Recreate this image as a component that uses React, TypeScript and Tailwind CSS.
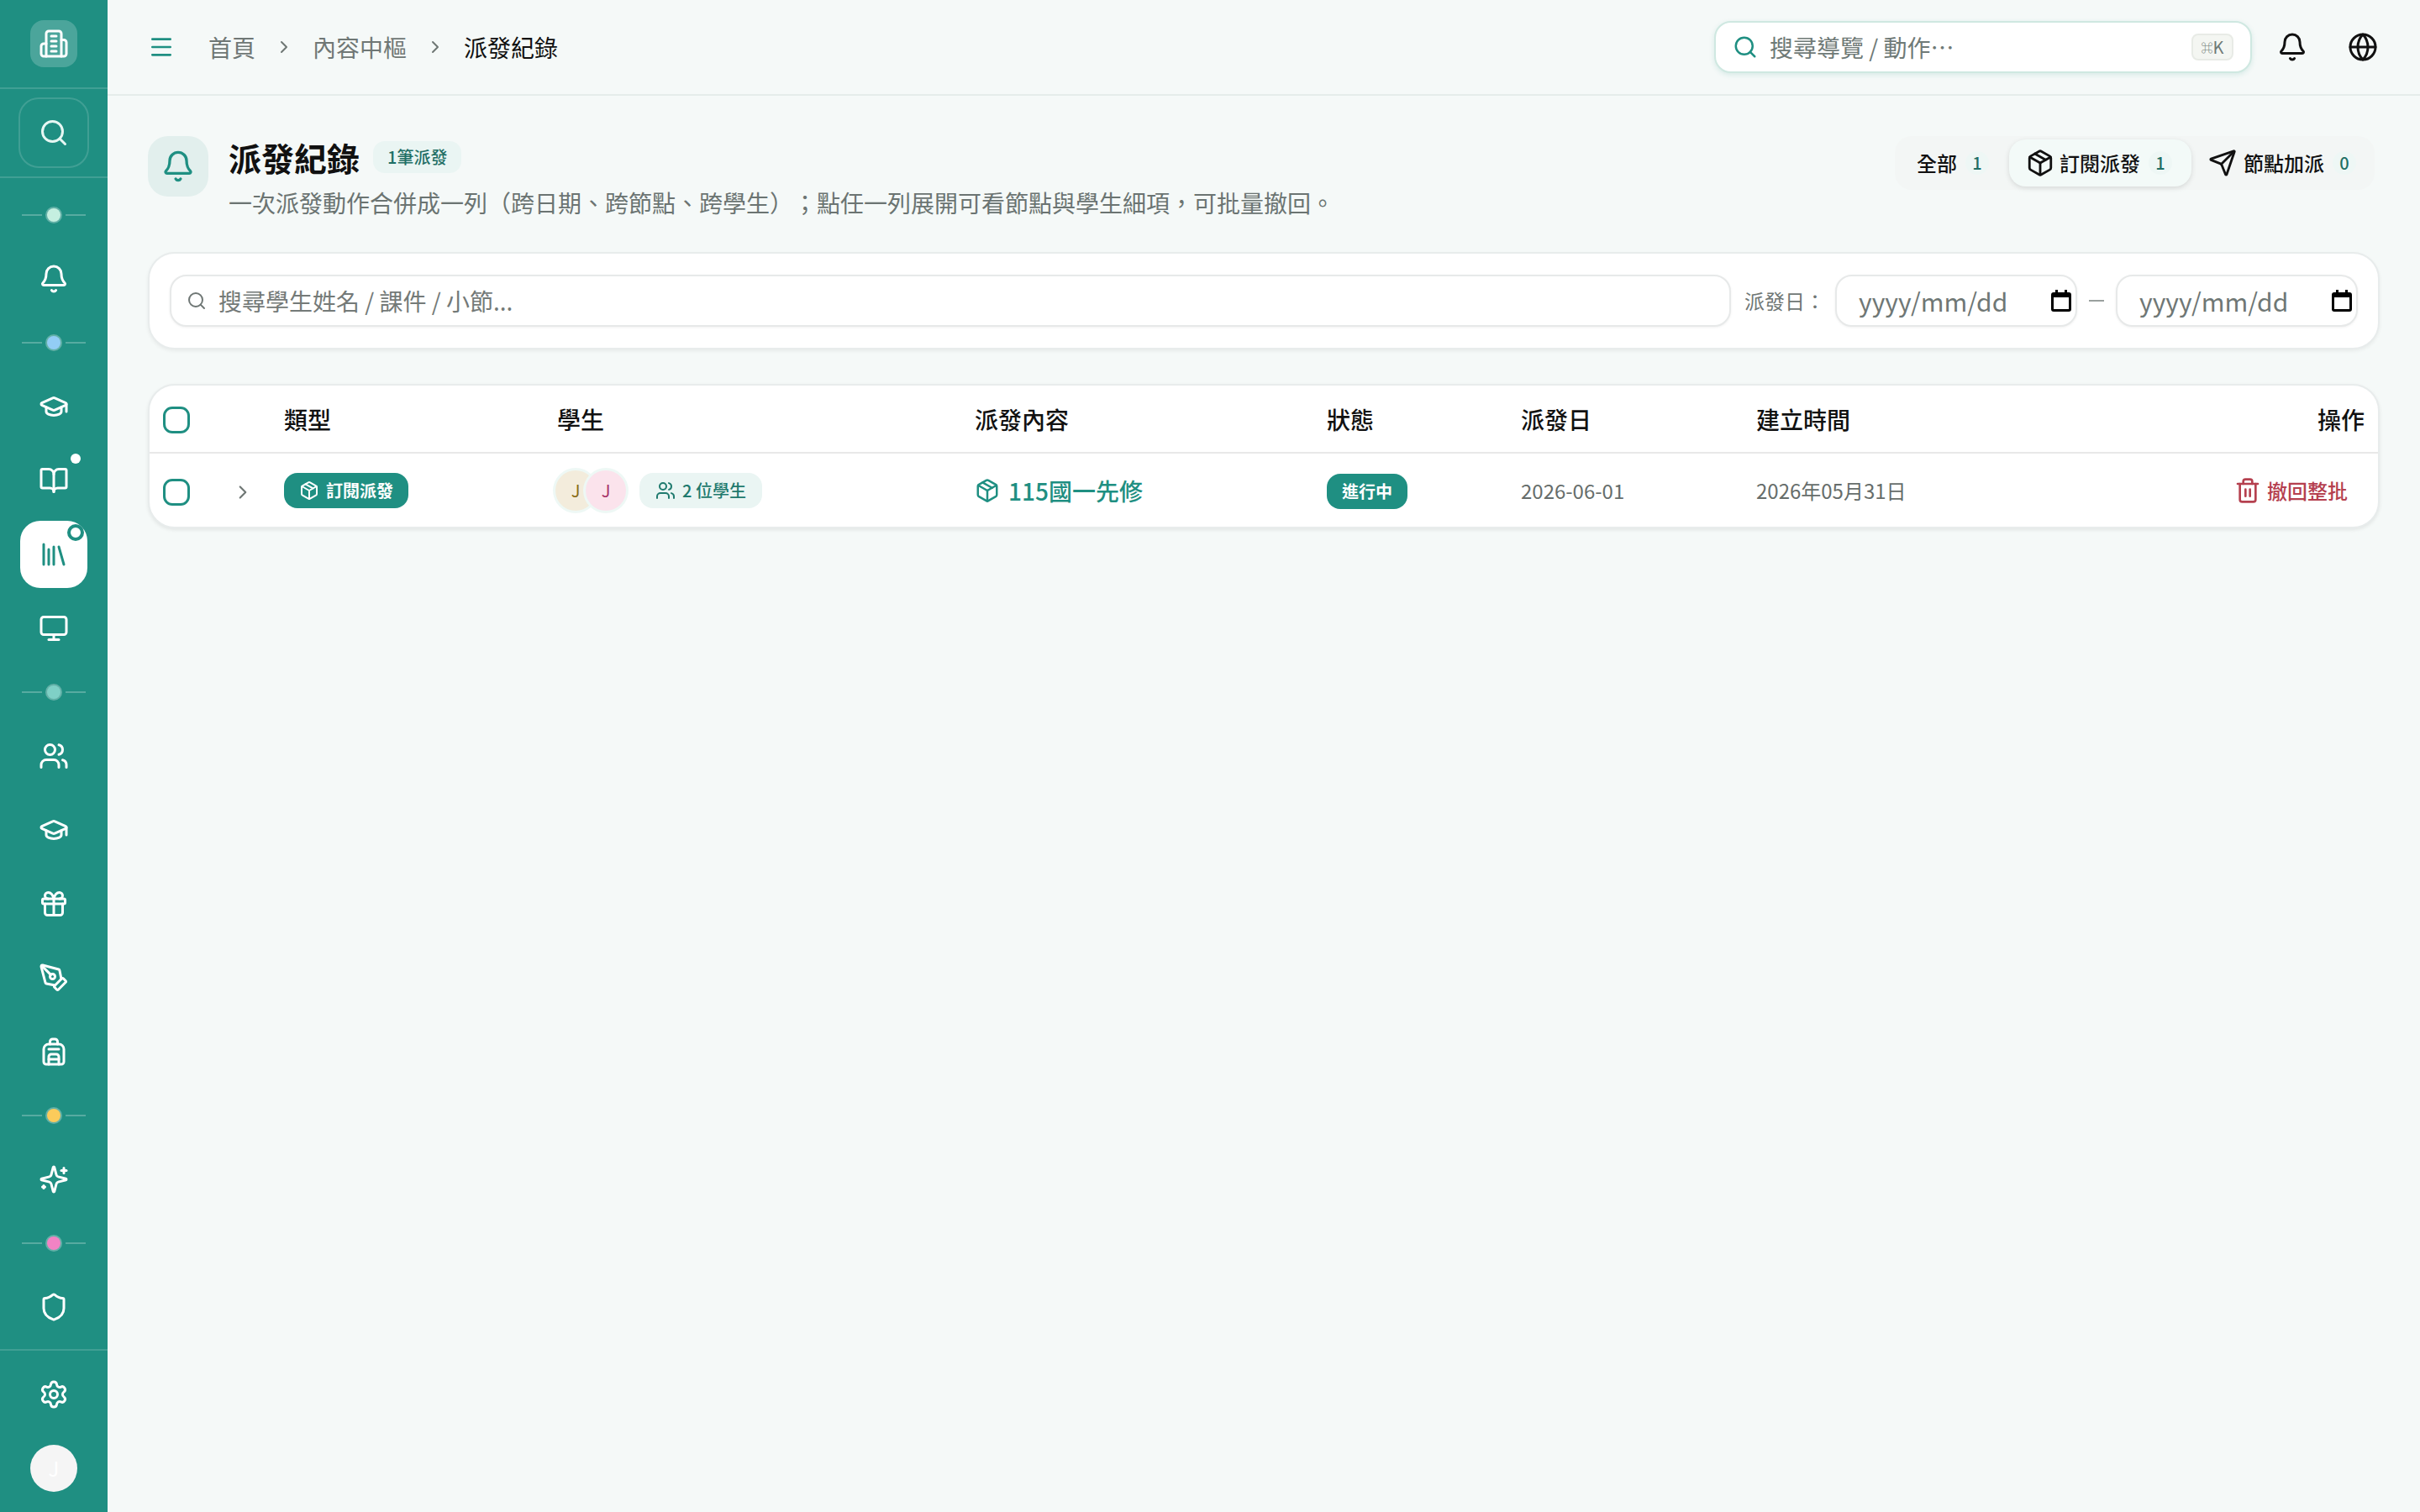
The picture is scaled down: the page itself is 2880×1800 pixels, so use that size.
import {
  Backpack,
  Bell,
  BookOpen,
  ChevronRight,
  Gift,
  Globe,
  GraduationCap,
  Library,
  Menu,
  Monitor,
  Package,
  PenTool,
  Search,
  Send,
  Settings,
  Shield,
  Trash2,
  Users,
} from "lucide-react";
import type { ReactNode } from "react";

function LogoIcon() {
  return (
    <svg width="36" height="36" viewBox="0 0 24 24" fill="none" stroke="currentColor" strokeWidth="2" strokeLinecap="round" strokeLinejoin="round">
      <path d="M6 22V4a2 2 0 0 1 2-2h8a2 2 0 0 1 2 2v18Z" />
      <path d="M6 12H4a2 2 0 0 0-2 2v6a2 2 0 0 0 2 2h2" />
      <path d="M18 9h2a2 2 0 0 1 2 2v9a2 2 0 0 1-2 2h-2" />
      <path d="M10 6h4" />
      <path d="M10 10h4" />
      <path d="M10 14h4" />
      <path d="M10 18h4" />
    </svg>
  );
}

function SparkIcon() {
  return (
    <svg width="36" height="36" viewBox="0 0 24 24" fill="none" stroke="currentColor" strokeWidth="2" strokeLinecap="round" strokeLinejoin="round">
      <path d="M9.937 15.5A2 2 0 0 0 8.5 14.063l-6.135-1.582a.5.5 0 0 1 0-.962L8.5 9.936A2 2 0 0 0 9.937 8.5l1.582-6.135a.5.5 0 0 1 .963 0L14.063 8.5A2 2 0 0 0 15.5 9.937l6.135 1.581a.5.5 0 0 1 0 .964L15.5 14.063a2 2 0 0 0-1.437 1.437l-1.582 6.135a.5.5 0 0 1-.963 0z" />
      <path d="M20 3v4" />
      <path d="M22 5h-4" />
      <path d="M4 17v2" />
      <path d="M5 18H3" />
    </svg>
  );
}

function GroupDot({ className }: { className: string }) {
  return (
    <div className="flex h-14 shrink-0 items-center justify-center gap-[6px]">
      <span className="h-[2px] w-6 bg-white/25" />
      <span className={`h-4 w-4 rounded-full ring-2 ring-white/30 ${className}`} />
      <span className="h-[2px] w-6 bg-white/25" />
    </div>
  );
}

function NavItem({ children, dot }: { children: ReactNode; dot?: boolean }) {
  return (
    <div className="relative mx-auto flex h-20 w-20 shrink-0 items-center justify-center text-white">
      {children}
      {dot && <span className="absolute right-2 top-2 h-3 w-3 rounded-full bg-white" />}
    </div>
  );
}

function Sidebar() {
  return (
    <aside className="flex h-full w-32 shrink-0 flex-col bg-[#1f8f82]">
      <div className="flex h-[106px] shrink-0 items-start justify-center border-b-2 border-white/15 pt-6">
        <div className="flex h-14 w-14 items-center justify-center rounded-2xl bg-white/20 text-white">
          <LogoIcon />
        </div>
      </div>
      <div className="flex h-[106px] shrink-0 items-center justify-center border-b-2 border-white/15">
        <div className="flex h-[84px] w-[84px] items-center justify-center rounded-3xl border-2 border-white/15 text-[#e6f7f3]">
          <Search size={36} />
        </div>
      </div>
      <nav className="flex flex-col gap-2 pt-4">
        <GroupDot className="bg-[#c5efe0]" />
        <NavItem><Bell size={36} /></NavItem>
        <GroupDot className="bg-[#93cdf5]" />
        <NavItem><GraduationCap size={36} /></NavItem>
        <NavItem dot><BookOpen size={36} /></NavItem>
        <div className="relative mx-auto flex h-20 w-20 shrink-0 items-center justify-center rounded-3xl bg-white text-[#1f8f82]">
          <Library size={36} />
          <span className="absolute right-1 top-1 h-5 w-5 rounded-full border-4 border-[#1f8f82] bg-white" />
        </div>
        <NavItem><Monitor size={36} /></NavItem>
        <GroupDot className="bg-[#7fd0c6]" />
        <NavItem><Users size={36} /></NavItem>
        <NavItem><GraduationCap size={36} /></NavItem>
        <NavItem><Gift size={36} /></NavItem>
        <NavItem><PenTool size={36} /></NavItem>
        <NavItem><Backpack size={36} /></NavItem>
        <GroupDot className="bg-[#fbcb5b]" />
        <NavItem><SparkIcon /></NavItem>
        <GroupDot className="bg-[#f183c4]" />
        <NavItem><Shield size={36} /></NavItem>
      </nav>
      <div className="mt-auto flex flex-col items-center gap-5 border-t-2 border-white/15 pb-6 pt-3">
        <NavItem><Settings size={36} /></NavItem>
        <div className="flex h-14 w-14 items-center justify-center rounded-full bg-[#f5f5f5] text-[24px] text-white">J</div>
      </div>
    </aside>
  );
}

function TopBar() {
  return (
    <header className="flex h-[114px] shrink-0 items-center border-b-2 border-[#e5ecea] pl-12 pr-[50px]">
      <Menu size={32} className="text-[#1f8f82]" />
      <nav className="ml-10 flex items-center text-[28px] text-[#6f7775]">
        <span>首頁</span>
        <ChevronRight size={24} className="mx-[22px]" />
        <span>內容中樞</span>
        <ChevronRight size={24} className="mx-[22px]" />
        <span className="text-[#111]">派發紀錄</span>
      </nav>
      <div className="ml-auto flex h-[62px] w-[640px] items-center rounded-[20px] border-2 border-[#cfe8e1] bg-white pl-5 pr-5 shadow-[0_2px_6px_rgba(31,143,130,0.14)]">
        <Search size={30} className="text-[#1f8f82]" />
        <span className="ml-[14px] text-[28px] text-[#6f7a77]">搜尋導覽 / 動作⋯</span>
        <span className="ml-auto flex h-8 w-[50px] items-center justify-center rounded-lg border-2 border-[#e8ebe6] bg-[#f4f6f2] text-[20px] text-[#6f7a77]">
          <span className="text-[14px]">⌘</span>K
        </span>
      </div>
      <Bell size={36} className="ml-[30px] text-[#111]" strokeWidth={2} />
      <Globe size={36} className="ml-12 text-[#111]" strokeWidth={2} />
    </header>
  );
}

function Count({ n }: { n: number }) {
  return (
    <span className="flex h-7 w-7 items-center justify-center rounded-full bg-[#eef7f5] text-[20px] font-medium text-[#1f6f65]">{n}</span>
  );
}

function PageHeader() {
  return (
    <div className="flex items-start justify-between">
      <div className="flex gap-6">
        <div className="flex h-[72px] w-[72px] items-center justify-center rounded-3xl bg-[#e2efed] text-[#1f8f82]">
          <Bell size={40} />
        </div>
        <div>
          <div className="flex h-[50px] items-center">
            <h1 className="text-[39px] font-bold leading-none text-[#111]">派發紀錄</h1>
            <span className="ml-4 flex h-[38px] items-center rounded-[14px] bg-[#eaf5f3] px-[17px] text-[20px] font-medium text-[#1f6f65]">1筆派發</span>
          </div>
          <p className="mt-[7px] text-[28px] leading-[44px] text-[#6b7472] [text-spacing-trim:space-all]">
            一次派發動作合併成一列（跨日期、跨節點、跨學生）；點任一列展開可看節點與學生細項，可批量撤回。
          </p>
        </div>
      </div>
      <div className="mr-[6px] flex h-16 items-center rounded-[20px] bg-[#f3f6f5] px-1">
        <div className="flex items-center gap-[10px] pl-[22px] pr-5 text-[24px] font-medium text-[#111]">
          全部
          <Count n={1} />
        </div>
        <div className="ml-1 flex h-14 w-[217px] items-center rounded-[20px] bg-[#f3faf8] pl-5 text-[24px] font-medium text-[#111] shadow-[0_2px_6px_rgba(0,0,0,0.12)]">
          <Package size={34} />
          <span className="ml-[6px]">訂閱派發</span>
          <span className="ml-[10px]"><Count n={1} /></span>
        </div>
        <div className="flex items-center pl-5 pr-[18px] text-[24px] font-medium text-[#111]">
          <Send size={34} />
          <span className="ml-2 mr-[10px]">節點加派</span>
          <Count n={0} />
        </div>
      </div>
    </div>
  );
}

function DateField() {
  return (
    <div className="flex h-[62px] w-[288px] items-center justify-between rounded-[20px] border-2 border-[#e7e9e9] bg-white pl-[26px] pr-[5px] text-[30px] text-[#6f7775] shadow-[0_1px_3px_rgba(0,0,0,0.06)]">
      yyyy/mm/dd
      <svg width="24" height="26" viewBox="0 0 24 26" className="text-black">
        <path fill="currentColor" d="M5 0h3v3h8V0h3v3h2a3 3 0 0 1 3 3v17a3 3 0 0 1-3 3H3a3 3 0 0 1-3-3V6a3 3 0 0 1 3-3h2zM3 9v14h18V9z" />
      </svg>
    </div>
  );
}

function FilterCard() {
  return (
    <div className="mt-[37px] flex h-[116px] items-center rounded-[32px] border-2 border-[#e8ecec] bg-white px-6 shadow-[0_2px_4px_rgba(0,0,0,0.06)]">
      <div className="flex h-[62px] flex-1 items-center rounded-[20px] border-2 border-[#e7e9e9] bg-white pl-[18px] text-[28px] text-[#747a78] shadow-[0_1px_3px_rgba(0,0,0,0.06)]">
        <Search size={24} className="text-[#6f7775]" />
        <span className="ml-[14px]">搜尋學生姓名 / 課件 / 小節...</span>
      </div>
      <span className="ml-4 w-[108px] shrink-0 text-[24px] text-[#6f7775]">派發日：</span>
      <DateField />
      <span className="mx-[14px] h-[2px] w-[18px] bg-[#9aa09e]" />
      <DateField />
    </div>
  );
}

function Check() {
  return <span className="h-8 w-8 rounded-[11px] border-[3px] border-[#1f8f82] bg-white" />;
}

function Table() {
  const head = "text-[28px] font-medium text-[#111]";
  const grid = "grid grid-cols-[160px_325px_497px_419px_231px_280px_1fr] items-center";
  return (
    <div className="mt-[41px] overflow-hidden rounded-[32px] border-2 border-[#e8ecec] bg-white shadow-[0_2px_4px_rgba(0,0,0,0.08)]">
      <div className={`${grid} h-[81px] border-b-2 border-[#e8e8e8]`}>
        <div className="pl-4"><div className="mt-[2px] flex"><Check /></div></div>
        <span className={head}>類型</span>
        <span className={head}>學生</span>
        <span className={head}>派發內容</span>
        <span className={head}>狀態</span>
        <span className={head}>派發日</span>
        <div className="flex items-center justify-between">
          <span className={head}>建立時間</span>
          <span className={`${head} mr-[16px]`}>操作</span>
        </div>
      </div>
      <div className={`${grid} h-[87px]`}>
        <div className="mt-1 flex items-center pl-4">
          <Check />
          <ChevronRight size={26} className="ml-[50px] text-[#6f7775]" />
        </div>
        <div>
          <span className="inline-flex h-[42px] items-center gap-2 rounded-2xl bg-[#1f8f82] px-[18px] text-[20px] font-semibold text-white">
            <Package size={24} />
            訂閱派發
          </span>
        </div>
        <div className="-ml-[2px] flex items-center">
          <span className="flex h-12 w-12 items-center justify-center rounded-full bg-[#f3ecdc] text-[20px] text-[#8a6d1a] ring-[3px] ring-[#eef8f5]">J</span>
          <span className="-ml-3 flex h-12 w-12 items-center justify-center rounded-full bg-[#fbe3ec] text-[20px] text-[#a8346a] ring-[3px] ring-[#eef8f5]">J</span>
          <span className="ml-4 inline-flex h-[42px] items-center gap-2 rounded-2xl bg-[#eaf5f3] px-[19px] text-[20px] font-medium text-[#1f7a6e]">
            <Users size={24} />
            2 位學生
          </span>
        </div>
        <div className="mt-[1px] flex items-center gap-[10px] text-[28px] font-medium text-[#1f8f82]">
          <Package size={30} />
          115國一先修
        </div>
        <div className="mt-[2px]">
          <span className="inline-flex h-[42px] items-center rounded-2xl bg-[#1f8f82] px-[18px] text-[20px] font-semibold text-white">進行中</span>
        </div>
        <span className="mt-[1px] text-[24px] text-[#666d6b]">2026-06-01</span>
        <div className="mt-[1px] flex items-center justify-between">
          <span className="text-[24px] text-[#666d6b]">2026年05月31日</span>
          <span className="mr-[36px] flex items-center gap-[7px] text-[24px] font-medium text-[#b5404f]">
            <Trash2 size={32} />
            撤回整批
          </span>
        </div>
      </div>
    </div>
  );
}

export default function App() {
  return (
    <div
      className="flex h-screen w-full overflow-hidden bg-[#f5f9f8]"
      style={{ fontFamily: '"Noto Sans CJK TC", "Noto Sans", sans-serif' }}
    >
      <Sidebar />
      <div className="flex min-w-0 flex-1 flex-col">
        <TopBar />
        <main className="px-12 pt-12">
          <PageHeader />
          <FilterCard />
          <Table />
        </main>
      </div>
    </div>
  );
}
